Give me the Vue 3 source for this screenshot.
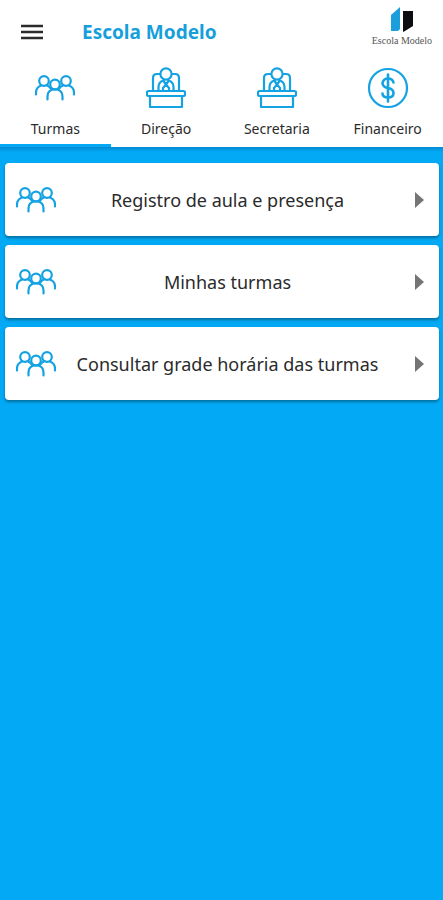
<script setup>
import { ref } from "vue";

const tabs = [
  { name: "Turmas", icon: "group" },
  { name: "Direção", icon: "desk" },
  { name: "Secretaria", icon: "desk" },
  { name: "Financeiro", icon: "money" },
];

const items = [
  "Registro de aula e presença",
  "Minhas turmas",
  "Consultar grade horária das turmas",
];

const active = ref("Turmas");
</script>

<template>
  <div class="app">
    <header class="topbar">
      <button class="menu" type="button" aria-label="Menu">
        <svg width="22" height="16" viewBox="0 0 22 16">
          <path d="M0 2h22M0 8h22M0 14h22" stroke="#2b2b2b" stroke-width="2.4" />
        </svg>
      </button>
      <h1>Escola Modelo</h1>
      <div class="logo">
        <svg width="24" height="26" viewBox="0 0 24 26">
          <path d="M1 8L10 0v22l-2 2H1z" fill="#1b9fdc" />
          <path d="M13 4h10v15l-8 5-2 1z" fill="#0b0d10" />
        </svg>
        <span>Escola Modelo</span>
      </div>
    </header>

    <nav class="tabs">
      <button
        v-for="tab in tabs"
        :key="tab.name"
        type="button"
        class="tab"
        :class="{ active: tab.name === active }"
        @click="active = tab.name"
      >
        <span class="tab-icon">
          <svg v-if="tab.icon === 'group'" class="icon" width="40" height="26" viewBox="0 0 40 26">
            <use href="#group" />
          </svg>
          <svg v-else-if="tab.icon === 'desk'" class="icon" width="40" height="42" viewBox="0 0 40 42">
            <circle cx="20" cy="7" r="5.6" />
            <path d="M14 7h-3q-4 0-4 4v13M26 7h3q4 0 4 4v13" />
            <path d="M12.5 24v-4q0-5 5-6.5M27.5 24v-4q0-5-5-6.5" />
            <path d="M17.5 14l2.5 3.5 2.5-3.5M17 24v-3l3-3.5 3 3.5v3" />
            <rect x="1" y="24" width="38" height="5" rx="1.5" />
            <path d="M4 29v11h32V29" />
          </svg>
          <svg v-else class="icon" width="42" height="42" viewBox="0 0 42 42">
            <circle cx="21" cy="21" r="19" />
            <path
              class="sign"
              d="M21 7.5v27M26.5 15.5q-1-4-5.5-4t-5.5 4.5q0 4 5.5 5t5.5 5q0 4.500-5.500 4.500t-5.500-4"
            />
          </svg>
        </span>
        <span class="tab-name">{{ tab.name }}</span>
      </button>
    </nav>

    <main class="list">
      <button v-for="item in items" :key="item" class="card" type="button">
        <svg class="icon" width="40" height="26" viewBox="0 0 40 26">
          <use href="#group" />
        </svg>
        <span class="card-name">{{ item }}</span>
        <svg width="9" height="16" viewBox="0 0 9 16">
          <path d="M0 0l9 8-9 8z" fill="#757575" />
        </svg>
      </button>
    </main>

    <svg class="defs" width="0" height="0" aria-hidden="true">
      <symbol id="group" viewBox="0 0 40 26">
        <circle cx="9" cy="6" r="4.8" />
        <circle cx="31" cy="6" r="4.8" />
        <circle cx="20" cy="9.5" r="4.8" />
        <path d="M1 19.5v-2q0-5 5-7M39 19.5v-2q0-5-5-7" />
        <path d="M11.5 10q3.5 1.500 5 4.500M28.500 10q-3.500 1.500-5 4.500" />
        <path d="M12.5 24.5v-3q0-7 7.500-7t7.500 7v3" />
      </symbol>
    </svg>
  </div>
</template>

<style>
body {
  margin: 0;
  background: #03a9f4;
}
</style>

<style scoped>
.app {
  min-height: 100vh;
  background: #03a9f4;
  font-family: "Noto Sans", "Open Sans", sans-serif;
  color: #2b2b2b;
}

button {
  border: 0;
  padding: 0;
  background: none;
  color: inherit;
  font-family: inherit;
  cursor: pointer;
}

svg {
  display: block;
  flex: none;
}

.icon {
  fill: none;
  stroke: #14a2e2;
  stroke-width: 2.2;
  stroke-linecap: round;
  stroke-linejoin: round;
}

.sign {
  stroke-width: 2.6;
}

.defs {
  position: absolute;
}

.topbar {
  display: flex;
  align-items: center;
  height: 64px;
  padding: 0 11px 0 20px;
  background: #fff;
}

.menu {
  padding: 0 1px;
}

h1 {
  flex: 1;
  margin: 0 0 0 38px;
  color: #169fdb;
  font-size: 19px;
  font-weight: 700;
  line-height: 28px;
}

.logo {
  display: flex;
  flex-direction: column;
  align-items: center;
  padding-bottom: 8px;
  color: #555;
  font-family: "Liberation Serif", serif;
  font-size: 10px;
  line-height: 16px;
}

.tabs {
  display: grid;
  grid-template-columns: repeat(4, 1fr);
  background: #fff;
}

.tab {
  padding-bottom: 5px;
  border-bottom: 3px solid #fff;
}

.tab.active {
  border-color: #03a9f4;
}

.tab-icon {
  display: flex;
  align-items: center;
  justify-content: center;
  height: 48px;
}

.tab-name {
  display: block;
  padding-top: 7px;
  font-size: 14px;
  line-height: 20px;
}

.list {
  display: flex;
  flex-direction: column;
  gap: 9px;
  padding: 16px 4px 16px 5px;
  background: linear-gradient(#0288d1, #03a9f4 5px);
}

.card {
  display: flex;
  align-items: center;
  height: 73px;
  padding: 0 15px 0 11px;
  border-radius: 4px;
  background: #fff;
  box-shadow: 0 2px 3px rgba(0, 0, 0, 0.35);
}

.card-name {
  flex: 1;
  padding-right: 16px;
  font-size: 18px;
  line-height: 24px;
}
</style>
